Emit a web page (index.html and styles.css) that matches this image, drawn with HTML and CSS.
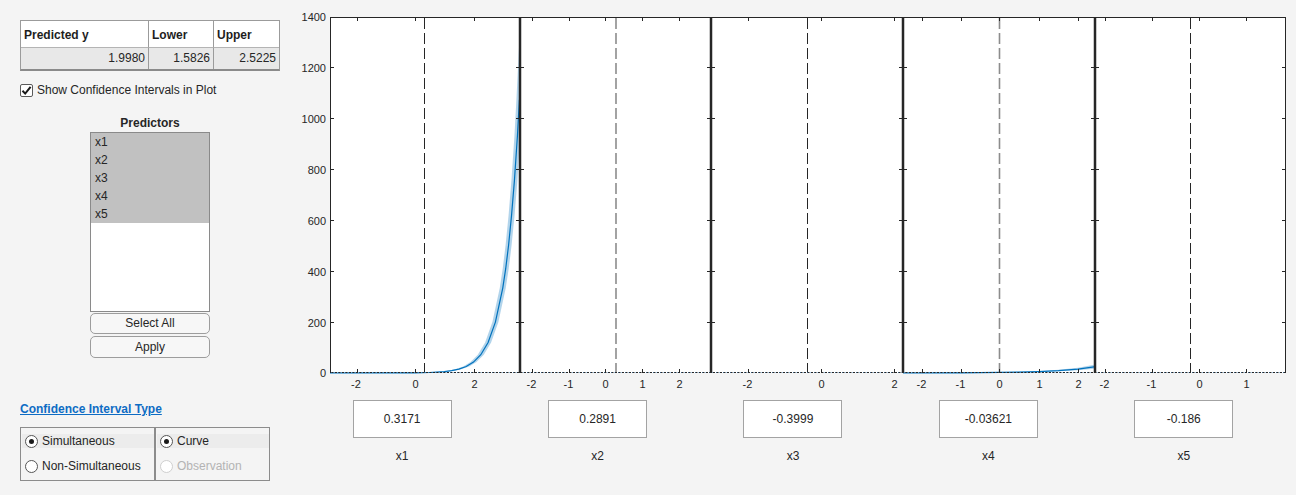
FILE: index.html
```html
<!DOCTYPE html>
<html>
<head>
<meta charset="utf-8">
<link rel="stylesheet" href="styles.css">
</head>
<body>
<div class="app">
  <div class="left">
    <div class="tbl">
      <div class="th">Predicted y</div>
      <div class="th">Lower</div>
      <div class="th last">Upper</div>
      <div class="td">1.9980</div>
      <div class="td">1.5826</div>
      <div class="td last">2.5225</div>
    </div>
    <label class="check">
      <span class="cbox"><svg width="11" height="11" viewBox="0 0 11 11"><path d="M1.5 5.8 L4.2 8.6 L9.6 1.8" fill="none" stroke="#1a1a1a" stroke-width="2"/></svg></span>
      <span>Show Confidence Intervals in Plot</span>
    </label>
    <div class="pred">
      <div class="pred-title">Predictors</div>
      <div class="list">
        <div class="item sel">x1</div>
        <div class="item sel">x2</div>
        <div class="item sel">x3</div>
        <div class="item sel">x4</div>
        <div class="item sel">x5</div>
      </div>
      <div class="btn btn1">Select All</div>
      <div class="btn btn2">Apply</div>
    </div>
    <div class="ci-link">Confidence Interval Type</div>
    <div class="groups">
      <div class="group g1">
        <div class="row on"><span class="radio checked"></span>Simultaneous</div>
        <div class="row"><span class="radio"></span>Non-Simultaneous</div>
      </div>
      <div class="group g2">
        <div class="row on"><span class="radio checked"></span>Curve</div>
        <div class="row dis"><span class="radio"></span>Observation</div>
      </div>
    </div>
  </div>
  <div class="right">
    <svg class="plot" width="996" height="395" viewBox="300 0 996 395">
      <rect x="330" y="17" width="956" height="356" fill="#fff"/>
      <!-- dashed current-value lines -->
      <g fill="none" stroke-dasharray="11 4">
        <path d="M424.5 18V372" stroke="#262626" stroke-width="1"/>
        <path d="M616 18V372" stroke="#8c8c8c" stroke-width="1.6"/>
        <path d="M807.5 18V372" stroke="#262626" stroke-width="1"/>
        <path d="M999.5 18V372" stroke="#8c8c8c" stroke-width="1.6"/>
        <path d="M1190.5 18V372" stroke="#262626" stroke-width="1"/>
      </g>
      <!-- flat prediction lines -->
      <path d="M331 372.5H1285" stroke="#4f97d3" stroke-width="1.2" stroke-dasharray="2 1.5" fill="none"/>
      <!-- panel 1 band + curve -->
      <path class="band" d="M330 373 L412 372.8 L426.6 372.5 L441.25 371.6 L448.6 370.65 L455.9 369.08 L463.2 366.45 L470.5 362.06 L477.8 354.74 L485.1 342.52 L492.4 322.1 L499.75 288.06 L502.7 268.7 L505.6 245 L508.5 215.9 L511.45 180.1 L514.4 136.2 L516.4 99.7 L518.8 51 L520 28 L520 136.2 L517.45 180.1 L514.5 215.9 L511.6 245 L508.7 268.7 L505.75 288.06 L498.4 322.1 L491.1 342.52 L483.8 354.74 L476.5 362.06 L469.2 366.45 L461.9 369.08 L454.6 370.65 L447.25 371.6 L432.6 372.5 L418 372.8 L330 373 Z"/>
      <path class="curve" d="M330 373 L415 372.8 L429.6 372.5 L444.25 371.6 L451.6 370.65 L458.9 369.08 L466.2 366.45 L473.5 362.06 L480.8 354.74 L488.1 342.52 L495.4 322.1 L502.75 288.06 L505.7 268.7 L508.6 245 L511.5 215.9 L514.45 180.1 L517.4 136.2 L519.4 99.7"/>
      <!-- panel 4 band + curve -->
      <path class="band" d="M903 373 L960.7 372.7 L999.5 372.3 L1019 371.8 L1039 371.08 L1058.5 369.8 L1078 367.7 L1094 364.8 L1094 368.7 L1078 370.3 L1058.5 371.35 L1039 372 L1019 372.4 L999.5 372.6 L960.7 373 Z"/>
      <path class="curve" d="M903 373 L960.7 372.8 L999.5 372.47 L1019 372.13 L1039 371.58 L1058.5 370.64 L1078 369.1 L1094 366.9"/>
      <!-- axes box -->
      <g fill="none" stroke="#262626">
        <path d="M330 17.5H1286M330 372.5H331M1285.5 17V373M330.5 17V373" stroke-width="1"/>
        <path d="M520 17V373M711 17V373M903 17V373M1095 17V373" stroke-width="2.5"/>
        <path stroke-width="1" d="M357.5 17v4M357.5 373v-4M415.5 17v4M415.5 373v-4M474.5 17v4M474.5 373v-4M532.5 17v4M532.5 373v-4M569.5 17v4M569.5 373v-4M605.5 17v4M605.5 373v-4M642.5 17v4M642.5 373v-4M679.5 17v4M679.5 373v-4M748.5 17v4M748.5 373v-4M821.5 17v4M821.5 373v-4M894.5 17v4M894.5 373v-4M922.5 17v4M922.5 373v-4M961.5 17v4M961.5 373v-4M999.5 17v4M999.5 373v-4M1039.5 17v4M1039.5 373v-4M1078.5 17v4M1078.5 373v-4M1105.5 17v4M1105.5 373v-4M1152.5 17v4M1152.5 373v-4M1199.5 17v4M1199.5 373v-4M1246.5 17v4M1246.5 373v-4"/>
        <path stroke-width="1" d="M330 67.5h4M516 67.5h8M707 67.5h8M899 67.5h8M1091 67.5h8M1282 67.5h4M330 118.5h4M516 118.5h8M707 118.5h8M899 118.5h8M1091 118.5h8M1282 118.5h4M330 169.5h4M516 169.5h8M707 169.5h8M899 169.5h8M1091 169.5h8M1282 169.5h4M330 220.5h4M516 220.5h8M707 220.5h8M899 220.5h8M1091 220.5h8M1282 220.5h4M330 271.5h4M516 271.5h8M707 271.5h8M899 271.5h8M1091 271.5h8M1282 271.5h4M330 322.5h4M516 322.5h8M707 322.5h8M899 322.5h8M1091 322.5h8M1282 322.5h4"/>
      </g>
      <path d="M330 372.5H1286" stroke="#262626" stroke-width="1" stroke-dasharray="2 1.5" stroke-dashoffset="2" fill="none"/>
      <!-- y labels -->
      <g class="ylab" text-anchor="end">
        <text x="326" y="21">1400</text>
        <text x="326" y="72">1200</text>
        <text x="326" y="123">1000</text>
        <text x="326" y="174">800</text>
        <text x="326" y="225">600</text>
        <text x="326" y="276">400</text>
        <text x="326" y="327">200</text>
        <text x="326" y="377">0</text>
      </g>
      <!-- x labels -->
      <g class="xlab" text-anchor="middle">
        <text x="356" y="388">-2</text>
        <text x="415.5" y="388">0</text>
        <text x="474.5" y="388">2</text>
        <text x="531.5" y="388">-2</text>
        <text x="568.5" y="388">-1</text>
        <text x="605.5" y="388">0</text>
        <text x="642.5" y="388">1</text>
        <text x="679.5" y="388">2</text>
        <text x="747.5" y="388">-2</text>
        <text x="821.5" y="388">0</text>
        <text x="894.5" y="388">2</text>
        <text x="921.5" y="388">-2</text>
        <text x="960.5" y="388">-1</text>
        <text x="999.5" y="388">0</text>
        <text x="1039.5" y="388">1</text>
        <text x="1078.5" y="388">2</text>
        <text x="1104.5" y="388">-2</text>
        <text x="1151.5" y="388">-1</text>
        <text x="1199.5" y="388">0</text>
        <text x="1246.5" y="388">1</text>
      </g>
    </svg>
    <div class="inputs">
      <div class="slot"><div class="box">0.3171</div><div class="name">x1</div></div>
      <div class="slot"><div class="box">0.2891</div><div class="name">x2</div></div>
      <div class="slot"><div class="box">-0.3999</div><div class="name">x3</div></div>
      <div class="slot"><div class="box">-0.03621</div><div class="name">x4</div></div>
      <div class="slot"><div class="box">-0.186</div><div class="name">x5</div></div>
    </div>
  </div>
</div>
</body>
</html>
```

FILE: styles.css
```css
* { box-sizing: border-box; }
html, body {
  margin: 0;
  padding: 0;
  background: #f4f4f4;
  font-family: "Liberation Sans", Arial, sans-serif;
  font-size: 12px;
  color: #262626;
}
.app {
  display: flex;
  width: 1296px;
  height: 495px;
  overflow: hidden;
}
.left {
  width: 300px;
  flex: none;
  padding: 20px 0 0 20px;
  display: flex;
  flex-direction: column;
  align-items: flex-start;
}
.tbl {
  display: grid;
  grid-template-columns: 128px 65px 65px;
  width: 260px;
  border: 1px solid #9b9b9b;
  border-bottom: 2px solid #8a8a8a;
  background: #fff;
}
.th {
  height: 27px;
  line-height: 28px;
  padding-left: 3px;
  font-weight: bold;
  border-right: 1px solid #9b9b9b;
  border-bottom: 1px solid #b4b4b4;
  color: #1e1e1e;
}
.td {
  height: 21px;
  line-height: 21px;
  text-align: right;
  padding-right: 3px;
  background: #e8e8e8;
  border-right: 1px solid #9b9b9b;
  color: #262626;
}
.th.last, .td.last { border-right: none; }
.check {
  margin-top: 12px;
  display: flex;
  align-items: center;
  height: 14px;
  gap: 4px;
}
.cbox {
  width: 13px;
  height: 13px;
  border: 1px solid #5a5a5a;
  border-radius: 2px;
  background: #fff;
  display: flex;
  align-items: center;
  justify-content: center;
}
.cbox svg { display: block; }
.pred {
  margin-left: 70px;
  margin-top: 19px;
  width: 120px;
  display: flex;
  flex-direction: column;
}
.pred-title {
  text-align: center;
  font-weight: bold;
  line-height: 14px;
  margin-bottom: 2px;
}
.list {
  height: 180px;
  border: 1px solid #8a8a8a;
  background: #fff;
}
.item {
  height: 18px;
  line-height: 18px;
  padding-left: 4px;
}
.item.sel { background: #c1c1c1; }
.btn {
  height: 21px;
  border: 1px solid #9d9d9d;
  border-radius: 5px;
  background: #f7f7f7;
  text-align: center;
  line-height: 19px;
}
.btn1 { margin-top: 1px; }
.btn2 { margin-top: 2px; height: 22px; line-height: 20px; }
.ci-link {
  margin-top: 44px;
  line-height: 14px;
  font-weight: bold;
  color: #0e6cc4;
  text-decoration: underline;
}
.groups {
  margin-top: 11px;
  display: flex;
  height: 54px;
}
.group {
  border: 1px solid #8c8c8c;
  padding: 6px 0 0 1px;
  display: flex;
  flex-direction: column;
  gap: 11px;
}
.g1 { width: 135px; }
.g2 { width: 115px; }
.row {
  height: 14px;
  display: flex;
  align-items: center;
  padding-left: 3px;
  gap: 4px;
  white-space: nowrap;
}
.row.on { background: #ececec; }
.radio {
  width: 13px;
  height: 13px;
  border-radius: 50%;
  border: 1px solid #555;
  background: #fff;
  flex: none;
  display: flex;
  align-items: center;
  justify-content: center;
}
.radio.checked::after {
  content: "";
  width: 5px;
  height: 5px;
  border-radius: 50%;
  background: #1a1a1a;
}
.row.dis { color: #b3b3b3; }
.row.dis .radio { border-color: #cfcfcf; }
.right {
  flex: 1;
  display: flex;
  flex-direction: column;
}
.plot { display: block; }
.plot text {
  font-family: "Liberation Sans", Arial, sans-serif;
  font-size: 11px;
  fill: #262626;
}
.band { fill: #0072bd; fill-opacity: 0.3; stroke: none; }
.curve { fill: none; stroke: #0072bd; stroke-width: 1.2; }
.inputs {
  margin-top: 5px;
  padding-left: 4.5px;
  display: grid;
  grid-template-columns: repeat(5, 195.4px);
}
.slot {
  display: flex;
  flex-direction: column;
  align-items: center;
}
.box {
  width: 99px;
  height: 38px;
  border: 1px solid #a3a3a3;
  background: #fff;
  display: flex;
  align-items: center;
  justify-content: center;
}
.name {
  margin-top: 11px;
  line-height: 14px;
}
```
